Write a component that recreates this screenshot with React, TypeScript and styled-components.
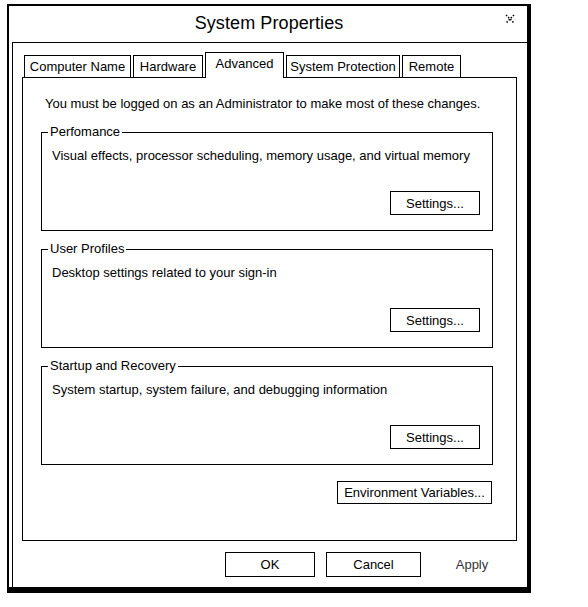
import React from 'react';
import styled, { createGlobalStyle } from 'styled-components';

const GlobalStyle = createGlobalStyle`
  body {
    margin: 0;
    background: #fff;
    color: #000;
    font-family: "Liberation Sans", Arial, sans-serif;
  }
`

const Window = styled.div`
  box-sizing: border-box;
  width: 524px;
  height: 589px;
  margin: 4px 0 0 7px;
  border-style: solid;
  border-color: #000;
  border-width: 2px 4px 6px 2px;
  display: flex;
  flex-direction: column;
`

const TitleBar = styled.div`
  height: 36px;
  display: grid;
  grid-template-columns: 1fr auto 1fr;
  align-items: center;
`

const Title = styled.span`
  grid-column: 2;
  font-size: 18px;
  letter-spacing: 0.1px;
  padding: 0 0 1px 2px;
`

const CloseGlyph = styled.svg`
  grid-column: 3;
  justify-self: end;
  margin: 0 12px 10px 0;
`

const Client = styled.div`
  flex: 1;
  margin-left: 3px;
  border-top: 1px solid #000;
  border-left: 1px solid #000;
  padding: 9px 10px 0 9px;
  display: flex;
  flex-direction: column;
`

const TabRow = styled.div`
  display: flex;
  align-items: flex-end;
  gap: 2px;
  padding-left: 2px;
  position: relative;
  z-index: 1;
`

const Tab = styled.div<{ $active?: boolean; $w: number }>`
  box-sizing: border-box;
  width: ${p => p.$w}px;
  height: ${p => (p.$active ? 26 : 22)}px;
  margin-bottom: ${p => (p.$active ? -1 : 0)}px;
  border: 1px solid #000;
  border-bottom: none;
  background: #fff;
  display: flex;
  align-items: center;
  justify-content: center;
  font-size: 13px;
  padding-bottom: ${p => (p.$active ? 4 : 0)}px;
`

const Panel = styled.div`
  box-sizing: border-box;
  height: 464px;
  border: 1px solid #000;
  padding: 18px 23px 0 18px;
  display: flex;
  flex-direction: column;
`

const Note = styled.p`
  margin: 0 0 12px 4px;
  font-size: 13px;
  line-height: 16px;
`

const Group = styled.fieldset`
  margin: 0 0 10px;
  border: 1px solid #000;
  padding: 0 12px 15px 10px;
  min-width: 0;
`

const Legend = styled.legend`
  margin-left: -4px;
  padding: 0 2px;
  font-size: 13px;
  line-height: 16px;
`

const Description = styled.div`
  margin-top: 8px;
  font-size: 13px;
  line-height: 16px;
`

const ButtonRow = styled.div<{ $top: number; $right?: number }>`
  display: flex;
  justify-content: flex-end;
  margin-top: ${p => p.$top}px;
  padding-right: ${p => p.$right || 0}px;
`

const Button = styled.button<{ $w: number; $h?: number; $gap?: number; $flat?: boolean }>`
  box-sizing: border-box;
  width: ${p => p.$w}px;
  height: ${p => p.$h || 24}px;
  margin-left: ${p => p.$gap || 0}px;
  padding: 0;
  background: #fff;
  border: ${p => (p.$flat ? 'none' : '1px solid #000')};
  color: ${p => (p.$flat ? '#333' : '#000')};
  font-family: "Liberation Sans", Arial, sans-serif;
  font-size: 13px;
`

const Footer = styled.div`
  display: flex;
  justify-content: flex-end;
  padding-top: 11px;
`

const groups = [
  { title: 'Perfomance', text: 'Visual effects, processor scheduling, memory usage, and virtual memory' },
  { title: 'User Profiles', text: 'Desktop settings related to your sign-in' },
  { title: 'Startup and Recovery', text: 'System startup, system failure, and debugging information' },
]

const tabs = [
  { name: 'Computer Name', w: 107 },
  { name: 'Hardware', w: 70 },
  { name: 'Advanced', w: 79, active: true },
  { name: 'System Protection', w: 114 },
  { name: 'Remote', w: 59 },
]

export default function App() {
  return (
    <>
      <GlobalStyle />
      <Window>
        <TitleBar>
          <Title>System Properties</Title>
          <CloseGlyph width="10" height="10" viewBox="0 0 10 10">
            <path d="M1 1 L9 9 M9 1 L1 9" stroke="#000" strokeWidth="1.5" strokeDasharray="1.5 1.5" fill="none" />
          </CloseGlyph>
        </TitleBar>
        <Client>
          <TabRow>
            {tabs.map(t => (
              <Tab key={t.name} $w={t.w} $active={t.active}>{t.name}</Tab>
            ))}
          </TabRow>
          <Panel>
            <Note>You must be logged on as an Administrator to make most of these changes.</Note>
            {groups.map(g => (
              <Group key={g.title}>
                <Legend>{g.title}</Legend>
                <Description>{g.text}</Description>
                <ButtonRow $top={27}>
                  <Button $w={90}>Settings...</Button>
                </ButtonRow>
              </Group>
            ))}
            <ButtonRow $top={6} $right={1}>
              <Button $w={155} $h={23}>Environment Variables...</Button>
            </ButtonRow>
          </Panel>
          <Footer>
            <Button $w={90} $h={25}>OK</Button>
            <Button $w={95} $h={25} $gap={11}>Cancel</Button>
            <Button $w={90} $h={25} $gap={6} $flat>Apply</Button>
          </Footer>
        </Client>
      </Window>
    </>
  );
}
